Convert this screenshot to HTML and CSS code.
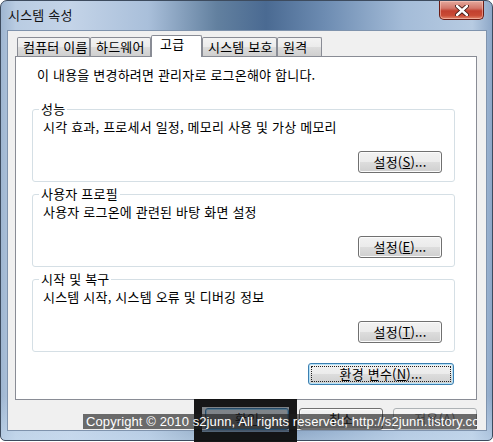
FILE: index.html
```html
<!DOCTYPE html>
<html lang="ko">
<head>
  <meta charset="UTF-8" />
  <meta name="viewport" content="width=device-width, initial-scale=1.0" />
  <title>시스템 속성</title>
  <link rel="stylesheet" href="styles.css">
</head>
<body>
  <div class="window">
    <div class="titlebar">
      <span class="title">시스템 속성</span>
      <div class="close-btn">
        <svg width="14" height="11" viewBox="0 0 14 11">
          <path d="M2 1 L12 10 M12 1 L2 10" stroke="#3a1410" stroke-width="4.2" stroke-linecap="round" />
          <path d="M2 1 L12 10 M12 1 L2 10" stroke="#fff" stroke-width="2.4" stroke-linecap="round" />
        </svg>
      </div>
    </div>

    <div class="client">
      <div class="tabs">
        <div class="tab tab-1">컴퓨터 이름</div>
        <div class="tab tab-2">하드웨어</div>
        <div class="tab active">고급</div>
        <div class="tab tab-4">시스템 보호</div>
        <div class="tab tab-5">원격</div>
      </div>

      <div class="panel">
        <p class="notice">이 내용을 변경하려면 관리자로 로그온해야 합니다.</p>

        <fieldset class="group">
          <legend>성능</legend>
          <p class="desc">시각 효과, 프로세서 일정, 메모리 사용 및 가상 메모리</p>
          <div class="group-actions">
            <button class="btn">설정(<u>S</u>)...</button>
          </div>
        </fieldset>

        <fieldset class="group">
          <legend>사용자 프로필</legend>
          <p class="desc">사용자 로그온에 관련된 바탕 화면 설정</p>
          <div class="group-actions">
            <button class="btn">설정(<u>E</u>)...</button>
          </div>
        </fieldset>

        <fieldset class="group">
          <legend>시작 및 복구</legend>
          <p class="desc">시스템 시작, 시스템 오류 및 디버깅 정보</p>
          <div class="group-actions">
            <button class="btn">설정(<u>T</u>)...</button>
          </div>
        </fieldset>

        <div class="env-row">
          <button class="btn btn-focus">환경 변수(<u>N</u>)...</button>
        </div>
      </div>

      <div class="dialog-buttons">
        <button class="btn btn-default">확인</button>
        <button class="btn">취소</button>
        <button class="btn" disabled>적용(<u>A</u>)</button>
      </div>
    </div>
  </div>

  <div class="mask"></div>
  <div class="watermark">Copyright © 2010 s2junn, All rights reserved, http://s2junn.tistory.com/</div>
</body>
</html>
```

FILE: styles.css
```css
body {
  margin: 0;
  position: relative;
  width: 493px;
  height: 442px;
  background: #fff;
  font-family: "Noto Sans CJK KR", "Noto Sans", sans-serif;
  font-size: 13px;
  letter-spacing: 0.2px;
  color: #000;
  overflow: hidden;
}
.window {
  box-sizing: border-box;
  width: 493px;
  height: 441px;
  border: 1px solid #3d4b5e;
  border-radius: 7px 7px 5px 5px;
  padding: 0 5px 9px 6px;
  display: flex;
  flex-direction: column;
  background:
    linear-gradient(180deg, rgba(255,255,255,0) 0%, rgba(255,255,255,0) 90%, rgba(200,220,240,0.6) 100%),
    linear-gradient(90deg, #9fb6d1 0%, #b9cce2 3%, #c4d4e8 14%, #a9bfda 30%, #62809f 44%, #4a6a92 54%, #6d8cb2 66%, #a4bcd8 82%, #b7cbe2 96%, #8ea8c8 100%);
}
.titlebar {
  height: 29px;
  display: flex;
  align-items: flex-start;
}
.title {
  padding: 6px 0 0 1px;
  line-height: 16px;
  color: #111;
}
.close-btn {
  margin-left: auto;
  margin-right: 3px;
  width: 45px;
  height: 19px;
  box-sizing: border-box;
  border: 1px solid #6b1c14;
  border-top: none;
  border-radius: 0 0 5px 5px;
  background: linear-gradient(180deg, #e4a99d 0%, #d2776a 40%, #c2402f 55%, #c94a35 80%, #e2876c 100%);
  box-shadow: inset 0 0 0 1px rgba(255,210,200,0.5);
  display: flex;
  align-items: center;
  justify-content: center;
}
.client {
  flex: 1;
  box-sizing: border-box;
  border: 1px solid #7f93ad;
  background: #f0f0f0;
  padding: 4px 0 0 7px;
}
.tabs {
  display: flex;
  align-items: flex-end;
  height: 21px;
  padding-left: 2px;
}
.tab {
  box-sizing: border-box;
  height: 19px;
  border: 1px solid #898c95;
  border-bottom: none;
  border-radius: 2px 2px 0 0;
  background: linear-gradient(180deg, #f3f3f3 0%, #ebebeb 50%, #dddddd 51%, #cfcfcf 100%);
  padding-left: 5px;
  line-height: 17px;
  white-space: nowrap;
}
.tab-1 { width: 73px; }
.tab-2 { width: 61px; }
.tab-4 { width: 75px; }
.tab-5 { width: 45px; }
.tab.active {
  position: relative;
  z-index: 1;
  width: 51px;
  height: 22px;
  margin-bottom: -1px;
  background: #fff;
  padding-left: 8px;
  line-height: 16px;
}
.panel {
  box-sizing: border-box;
  width: 462px;
  height: 344px;
  border: 1px solid #898c95;
  background: #fff;
  padding: 11px 21px 0 16px;
}
.notice {
  margin: 0 0 20px;
  padding-left: 5px;
  line-height: 14px;
}
.group {
  box-sizing: border-box;
  width: 423px;
  height: 80px;
  margin: 0 0 5px;
  padding: 0 12px 0 6px;
  border: 1px solid #d5dfe5;
  border-radius: 3px;
  min-inline-size: auto;
}
.group legend {
  padding: 0 2px;
  line-height: 14px;
}
.desc {
  margin: 4px 0 0;
  padding-left: 4px;
  line-height: 14px;
}
.group-actions {
  display: flex;
  justify-content: flex-end;
  margin-top: 17px;
}
.btn {
  box-sizing: border-box;
  width: 84px;
  height: 22px;
  padding: 0;
  border: 1px solid #707070;
  border-radius: 3px;
  background: linear-gradient(180deg, #f2f2f2 0%, #ebebeb 50%, #dddddd 51%, #cfcfcf 100%);
  box-shadow: inset 0 0 0 1px #fbfbfb;
  font-family: "Noto Sans CJK KR", "Noto Sans", sans-serif;
  font-size: 13px;
  letter-spacing: 0.2px;
  line-height: 18px;
  color: #000;
}
.btn u {
  text-underline-offset: 1px;
}
.btn:disabled {
  border-color: #adb2b5;
  background: #f4f4f4;
  box-shadow: none;
  color: #838383;
}
.env-row {
  display: flex;
  justify-content: flex-end;
  margin-top: 11px;
  padding-right: 1px;
}
.btn-focus {
  width: 146px;
  border-color: #3c7fb1;
  box-shadow: inset 0 0 0 1px #b6e2f8;
  outline: 1px dotted #222;
  outline-offset: -4px;
}
.btn-default {
  border-color: #3c7fb1;
  box-shadow: inset 0 0 0 1px #9fd4f3;
}
.dialog-buttons {
  display: flex;
  justify-content: flex-end;
  gap: 10px;
  width: 462px;
  margin-top: 8px;
}
.mask {
  position: absolute;
  left: 194px;
  top: 399px;
  width: 103px;
  height: 43px;
  box-sizing: border-box;
  border: solid rgba(14, 14, 14, 0.92);
  border-width: 8px 8px 10px 8px;
  background: rgba(14, 24, 34, 0.5);
}
.watermark {
  position: absolute;
  left: 83px;
  top: 414px;
  width: 394px;
  height: 15px;
  box-sizing: border-box;
  padding-left: 3px;
  background: rgba(30, 30, 30, 0.64);
  color: #fff;
  font-family: "Liberation Sans", Arial, sans-serif;
  font-size: 13px;
  letter-spacing: 0.1px;
  line-height: 15px;
  white-space: nowrap;
  overflow: hidden;
}
```
